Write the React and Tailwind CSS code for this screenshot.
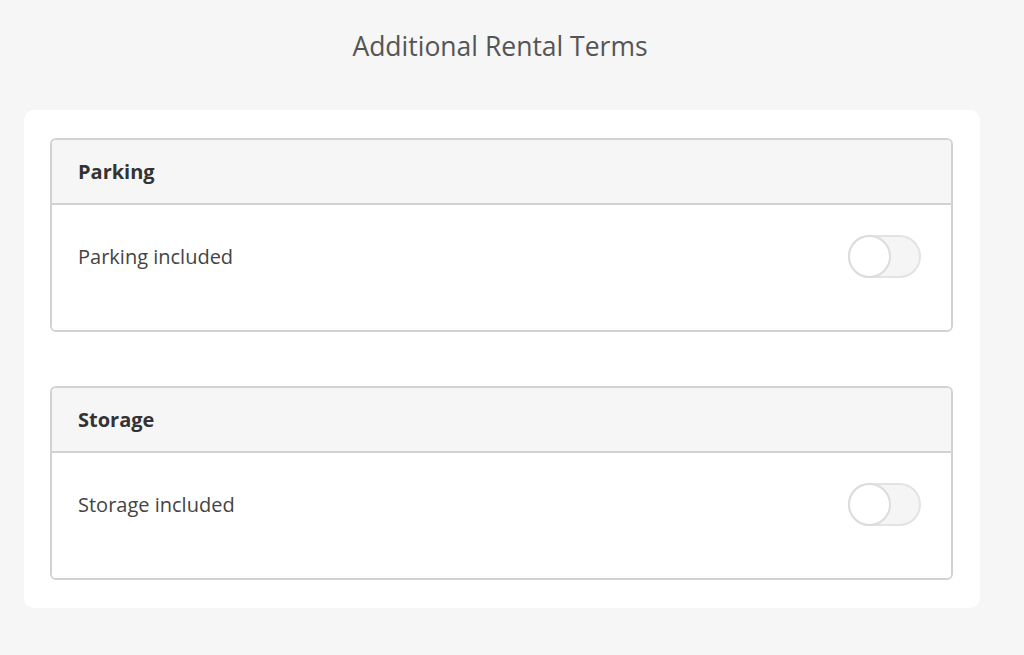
import React from "react";

function Toggle() {
  return (
    <div className="relative w-[73px] h-[43px] rounded-full bg-[#f5f5f5] border-2 border-[#e3e3e3] box-border">
      <div className="absolute left-[-2px] top-[-2px] w-[43px] h-[43px] rounded-full bg-white border-2 border-[#dcdcdc] box-border" />
    </div>
  );
}

function Section({ title, label }) {
  return (
    <div className="border-2 border-[#d2d2d2] rounded-[6px] overflow-hidden">
      <div className="h-[65px] bg-[#f6f6f6] border-b-2 border-[#d2d2d2] flex items-center px-[26px]">
        <span className="text-[20px] font-bold text-[#333]">{title}</span>
      </div>
      <div className="h-[125px] bg-white pl-[26px] pt-[30px] pr-[30px]">
        <div className="flex items-center justify-between h-[43px]">
          <span className="text-[20px] text-[#444]">{label}</span>
          <Toggle />
        </div>
      </div>
    </div>
  );
}

export default function App() {
  return (
    <div
      className="w-[1024px] h-[655px] bg-[#f6f6f6] overflow-hidden"
      style={{ fontFamily: '"Open Sans", sans-serif' }}
    >
      <div className="h-[110px] flex justify-center pt-[27px] pr-[24px]">
        <h1 className="text-[26.5px] leading-[38px] text-[#555] font-normal">Additional Rental Terms</h1>
      </div>
      <div className="ml-[24px] w-[956px] bg-white rounded-[10px] pl-[26px] pr-[27px] pt-[28px] pb-[28px] flex flex-col gap-[54px]">
        <Section title="Parking" label="Parking included" />
        <Section title="Storage" label="Storage included" />
      </div>
    </div>
  );
}
